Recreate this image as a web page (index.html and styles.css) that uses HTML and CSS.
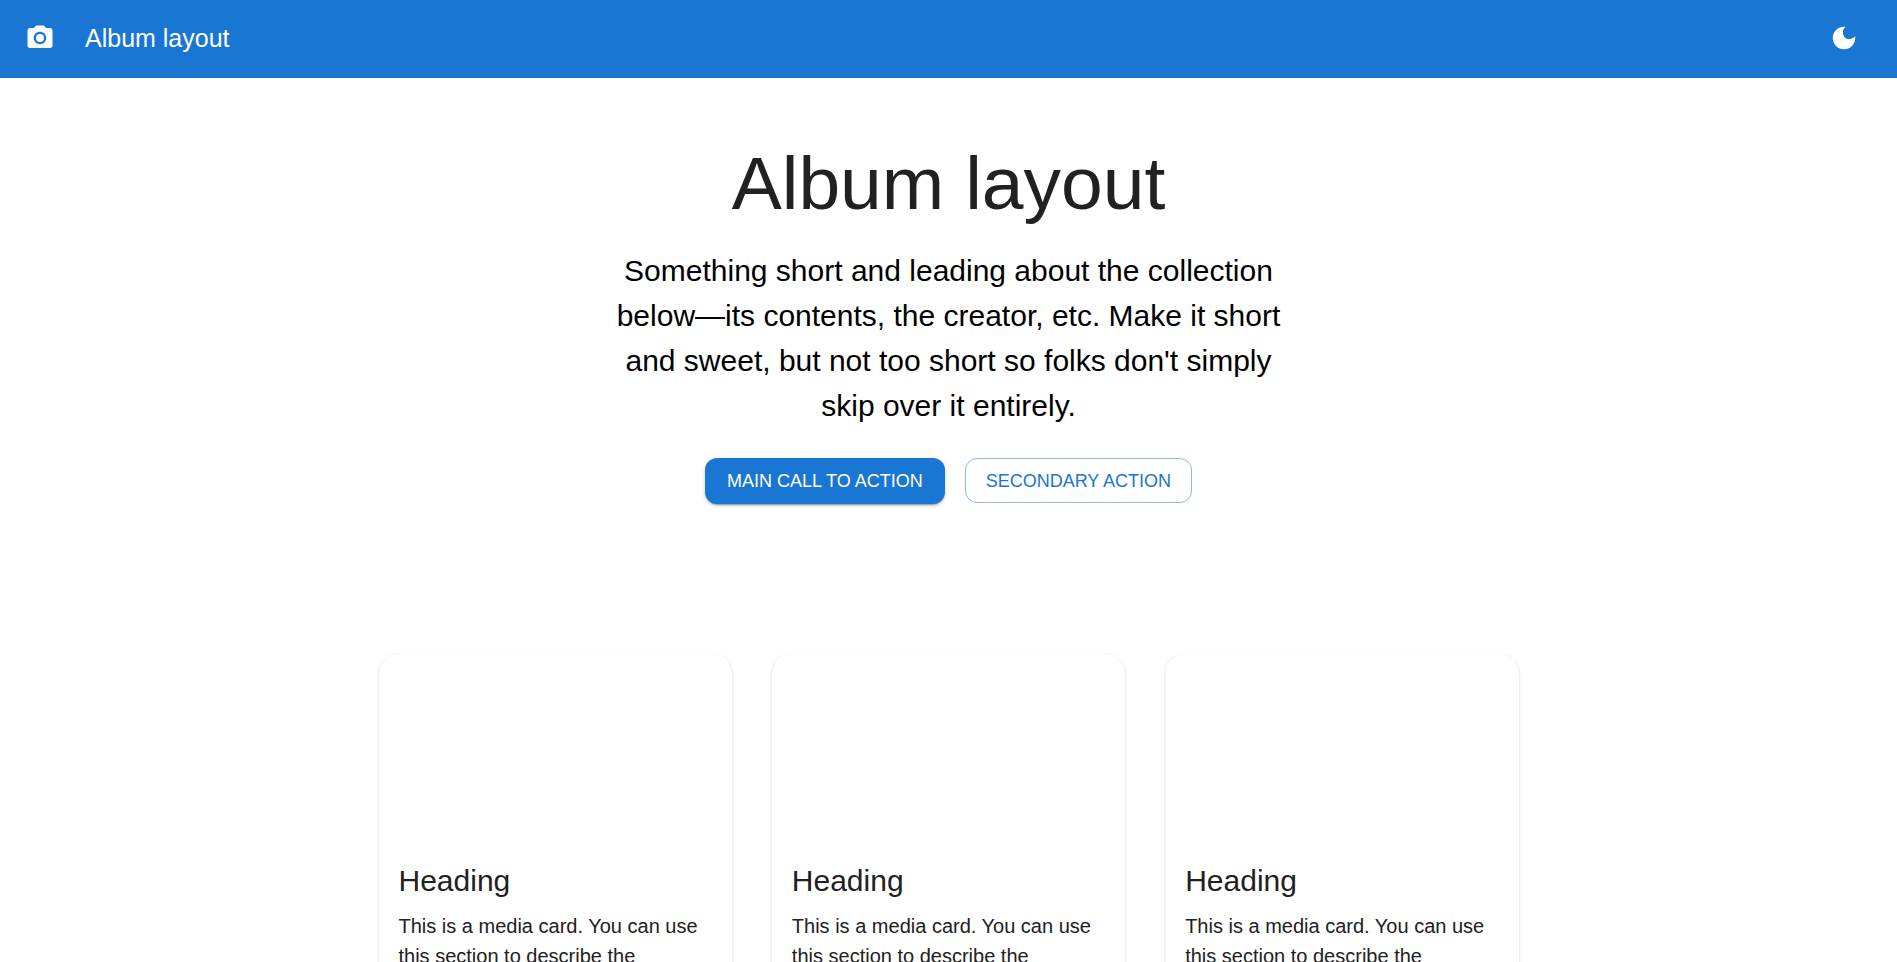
FILE: index.html
```html
<!DOCTYPE html>
<html lang="en">
<head>
<meta charset="utf-8">
<meta name="viewport" content="width=device-width, initial-scale=1">
<title>Album layout</title>
<link rel="stylesheet" href="styles.css">
</head>
<body>
<header class="app-bar">
  <svg class="icon" viewBox="0 0 24 24" aria-hidden="true"><circle cx="12" cy="12" r="3.2"/><path d="M9 2 7.17 4H4c-1.1 0-2 .9-2 2v12c0 1.1.9 2 2 2h16c1.1 0 2-.9 2-2V6c0-1.1-.9-2-2-2h-3.17L15 2H9zm3 15c-2.76 0-5-2.24-5-5s2.24-5 5-5 5 2.24 5 5-2.24 5-5 5z"/></svg>
  <span class="app-title">Album layout</span>
  <button class="icon-button" type="button" aria-label="Toggle dark mode">
    <svg class="icon" viewBox="0 0 24 24" aria-hidden="true"><path d="M12 3a9 9 0 1 0 9 9c0-.46-.04-.92-.1-1.36a5.389 5.389 0 0 1-4.4 2.26 5.403 5.403 0 0 1-3.14-9.8c-.44-.06-.9-.1-1.36-.1z"/></svg>
  </button>
</header>
<main>
  <section class="hero">
    <h1 class="hero-title">Album layout</h1>
    <p class="hero-text">Something short and leading about the collection below—its contents, the creator, etc. Make it short and sweet, but not too short so folks don't simply skip over it entirely.</p>
    <div class="actions">
      <button class="button button-main" type="button">MAIN CALL TO ACTION</button>
      <button class="button button-outlined" type="button">SECONDARY ACTION</button>
    </div>
  </section>
  <section class="cards">
    <article class="card">
      <div class="card-media"></div>
      <div class="card-content">
        <h2 class="card-title">Heading</h2>
        <p class="card-text">This is a media card. You can use this section to describe the content.</p>
      </div>
    </article>
    <article class="card">
      <div class="card-media"></div>
      <div class="card-content">
        <h2 class="card-title">Heading</h2>
        <p class="card-text">This is a media card. You can use this section to describe the content.</p>
      </div>
    </article>
    <article class="card">
      <div class="card-media"></div>
      <div class="card-content">
        <h2 class="card-title">Heading</h2>
        <p class="card-text">This is a media card. You can use this section to describe the content.</p>
      </div>
    </article>
  </section>
</main>
</body>
</html>
```
FILE: styles.css
```css
* {
  box-sizing: border-box;
}

body {
  margin: 0;
  background: #fff;
  color: #212121;
  font-family: "Liberation Sans", Arial, sans-serif;
  font-size: 20px;
  line-height: 30px;
}

h1, h2, p {
  margin: 0;
  font-weight: 400;
}

button {
  font-family: inherit;
  cursor: pointer;
}

.app-bar {
  display: flex;
  align-items: center;
  gap: 30px;
  min-height: 78px;
  padding: 0 28px 2px 25px;
  background: #1976d2;
  color: #fff;
}

.icon {
  display: block;
  flex: none;
  width: 30px;
  height: 30px;
  fill: currentColor;
}

.app-title {
  flex: 1;
  font-size: 25px;
  line-height: 40px;
}

.icon-button {
  padding: 10px;
  border: 0;
  border-radius: 50%;
  background: transparent;
  color: inherit;
}

.hero {
  max-width: 750px;
  margin: 0 auto;
  padding: 60px 30px;
  text-align: center;
}

.hero-title {
  font-size: 75px;
  line-height: 90px;
}

.hero-text {
  margin-top: 20px;
  color: #000;
  font-size: 30px;
  line-height: 45px;
}

.actions {
  display: flex;
  justify-content: center;
  align-items: flex-start;
  gap: 20px;
  margin-top: 30px;
}

.button {
  padding: 8px 22px;
  border: 0;
  border-radius: 12px;
  font-size: 18px;
  line-height: 30px;
}

.button-main {
  background: #1976d2;
  color: #fff;
  box-shadow: 0 3px 1px -2px rgba(0, 0, 0, 0.2), 0 2px 2px rgba(0, 0, 0, 0.14), 0 1px 5px rgba(0, 0, 0, 0.12);
}

.button-outlined {
  padding: 7px 20px 6px;
  border: 1px solid rgba(25, 118, 210, 0.5);
  background: transparent;
  color: #1976d2;
}

.cards {
  display: grid;
  grid-template-columns: repeat(3, 1fr);
  gap: 40px;
  max-width: 1200px;
  margin: 0 auto;
  padding: 90px 30px;
}

.card {
  overflow: hidden;
  border-radius: 20px;
  background: #fff;
  box-shadow: 0 2px 1px -1px rgba(0, 0, 0, 0.2), 0 1px 1px rgba(0, 0, 0, 0.14), 0 1px 3px rgba(0, 0, 0, 0.16);
}

.card-media {
  height: 187px;
}

.card-content {
  padding: 20px;
}

.card-title {
  margin-bottom: 10px;
  font-size: 30px;
  line-height: 40px;
}
```
